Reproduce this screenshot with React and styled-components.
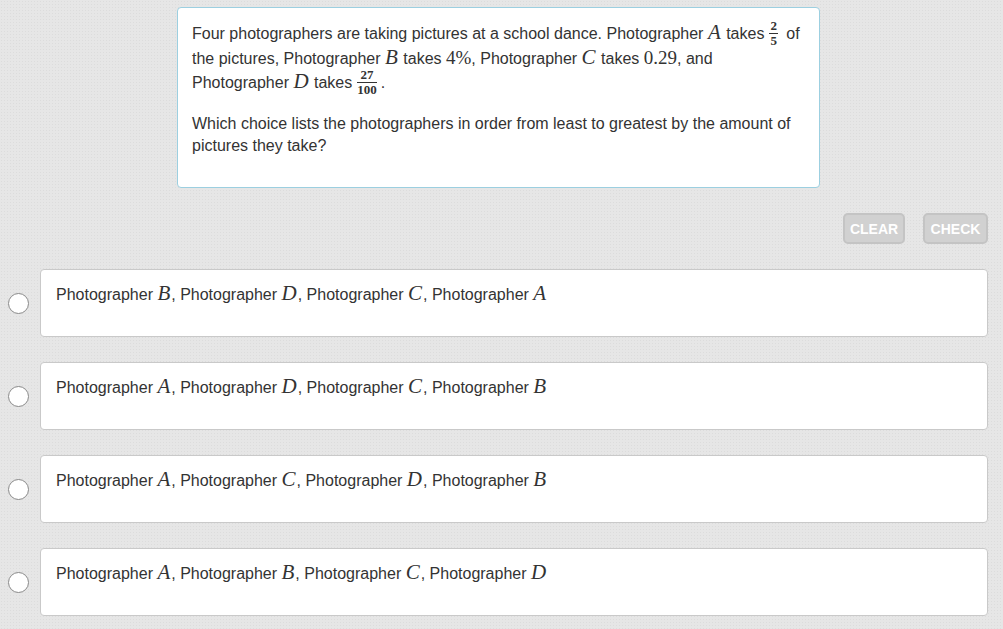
import React from "react";
import styled, { createGlobalStyle } from "styled-components";

const Global = createGlobalStyle`
  html, body { margin: 0; padding: 0; }
  body {
    background-color: #e6e6e6;
    background-image: radial-gradient(#dcdcdc 0.6px, transparent 0.7px);
    background-size: 3px 3px;
    font-family: "Liberation Sans", Arial, sans-serif;
    color: #333;
    width: 1003px;
    height: 629px;
    overflow: hidden;
  }
`;

const Page = styled.div`
  display: flex;
  flex-direction: column;
  padding-top: 7px;
`;

const QuestionCard = styled.div`
  margin-left: 177px;
  width: 643px;
  height: 181px;
  box-sizing: border-box;
  background: #fff;
  border: 1px solid #9ccfe0;
  border-radius: 4px;
  padding: 14px 14px 0 14px;
  font-size: 16px;
`;

const Para = styled.p`
  margin: 0 0 ${(p) => p.$mb || 0}px 0;
  line-height: ${(p) => p.$lh}px;
`;

const V = styled.span`
  font-family: "Liberation Serif", "Times New Roman", serif;
  font-style: italic;
  font-size: 21px;
  line-height: 16px;
  margin-right: 1px;
`;

const N = styled.span`
  font-family: "Liberation Serif", "Times New Roman", serif;
  font-size: 19px;
  line-height: 16px;
`;

const Frac = styled.span`
  display: inline-flex;
  flex-direction: column;
  align-items: center;
  vertical-align: middle;
  font-family: "Liberation Serif", "Times New Roman", serif;
  font-weight: bold;
  font-size: 13px;
  line-height: 12px;
  margin: -10px 4px -10px 5px;
  position: relative;
  top: -1px;
`;

const Num = styled.span`
  border-bottom: 1px solid #333;
  padding: 0 1px 1px;
  align-self: stretch;
  text-align: center;
`;

const Den = styled.span`
  padding-top: 1px;
`;

const ButtonRow = styled.div`
  display: flex;
  justify-content: flex-end;
  gap: 18px;
  margin: 25px 15px 25px 0;
`;

const Btn = styled.button`
  height: 31px;
  width: ${(p) => p.$w}px;
  box-sizing: border-box;
  background: #d1d1d1;
  border: 2px solid #c4c4c4;
  border-radius: 5px;
  color: #fff;
  font-family: "Liberation Sans Narrow", "Liberation Sans", Arial, sans-serif;
  font-weight: bold;
  font-size: 14px;
  padding: 0;
`;

const Options = styled.div`
  display: flex;
  flex-direction: column;
  gap: 25px;
`;

const OptionRow = styled.div`
  display: flex;
  align-items: center;
`;

const RadioCol = styled.div`
  width: 40px;
  display: flex;
  padding-left: 8px;
  box-sizing: border-box;
`;

const Radio = styled.span`
  width: 21px;
  height: 21px;
  box-sizing: border-box;
  border-radius: 50%;
  border: 1.5px solid #8a8a8a;
  background: #fff;
`;

const OptionBox = styled.div`
  width: 948px;
  height: 68px;
  box-sizing: border-box;
  background: #fff;
  border: 1px solid #c9c9c9;
  border-radius: 4px;
  padding: 14px 15px 0;
  font-size: 16px;
  line-height: 22px;
`;

const options = [
  ["B", "D", "C", "A"],
  ["A", "D", "C", "B"],
  ["A", "C", "D", "B"],
  ["A", "B", "C", "D"],
];

export default function App() {
  return (
    <>
      <Global />
      <Page>
        <QuestionCard>
          <Para $lh={24.5} $mb={17}>
            Four photographers are taking pictures at a school dance. Photographer <V>A</V> takes
            <Frac><Num>2</Num><Den>5</Den></Frac> of the pictures, Photographer <V>B</V> takes <N>4%</N>,
            Photographer <V>C</V> takes <N>0.29</N>, and Photographer <V>D</V> takes
            <Frac><Num>27</Num><Den>100</Den></Frac>.
          </Para>
          <Para $lh={22}>
            Which choice lists the photographers in order from least to greatest by the amount of
            pictures they take?
          </Para>
        </QuestionCard>
        <ButtonRow>
          <Btn $w={62}>CLEAR</Btn>
          <Btn $w={65}>CHECK</Btn>
        </ButtonRow>
        <Options>
          {options.map((o, i) => (
            <OptionRow key={i}>
              <RadioCol><Radio /></RadioCol>
              <OptionBox>
                Photographer <V>{o[0]}</V>, Photographer <V>{o[1]}</V>, Photographer <V>{o[2]}</V>, Photographer <V>{o[3]}</V>
              </OptionBox>
            </OptionRow>
          ))}
        </Options>
      </Page>
    </>
  );
}
